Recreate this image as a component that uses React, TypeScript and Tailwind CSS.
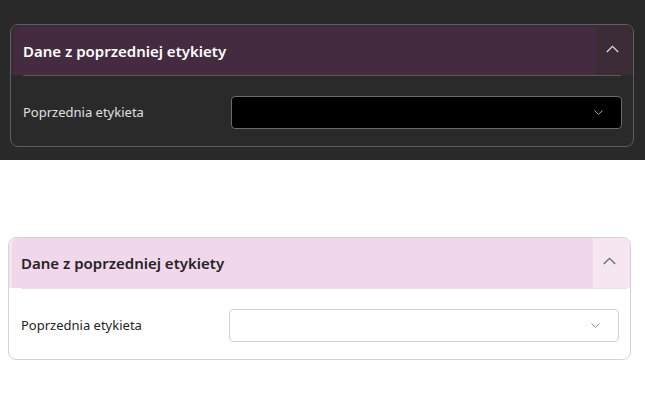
interface Props {
  dark?: boolean
}

function Section({ dark }: Props) {
  return (
    <div
      className={
        dark
          ? 'rounded-lg border border-[#5e5e5e] bg-[#2a2a2a] overflow-hidden'
          : 'rounded-lg border border-[#d4d4d4] bg-white overflow-hidden'
      }
    >
      <div
        className={
          dark
            ? 'flex bg-[#3a2b36] pl-[3px] pt-[2px]'
            : 'flex bg-[#f6e6f1] pl-[3px]'
        }
      >
        <div
          className={
            dark
              ? 'flex-1 h-[48px] flex items-center pl-[9px] bg-[#452b3f] rounded-tl-[6px]'
              : 'flex-1 h-[50px] flex items-center pl-[9px] bg-[#f1d7ea] rounded-tl-[6px]'
          }
        >
          <span
            className={
              dark
                ? 'text-[15px] font-semibold text-white'
                : 'text-[15px] font-semibold text-[#242424]'
            }
          >
            Dane z poprzedniej etykiety
          </span>
        </div>
        <div className={dark ? 'w-[37px] pt-[18px] pl-[10px]' : 'w-[37px] pt-[19px] pl-[10px]'}>
          {/* chevron up */}
          <svg width="13" height="8" viewBox="0 0 13 8" fill="none">
            <path
              d="M0.8 7 L6.5 1.3 L12.2 7"
              stroke={dark ? '#d9d9d9' : '#6b6b6b'}
              strokeWidth="1.3"
            />
          </svg>
        </div>
      </div>
      <div className={dark ? 'mx-[12px] h-px bg-[#5a5a5a]' : 'ml-[12px] mr-[3px] h-px bg-[#e3e3e3]'} />
      <div className="flex items-center pl-[12px] pr-[11px] pt-[20px] pb-[17px]">
        <span className={dark ? 'w-[208px] text-[13px] text-[#e0e0e0]' : 'w-[208px] text-[13px] text-[#242424]'}>
          Poprzednia etykieta
        </span>
        <div
          className={
            dark
              ? 'flex-1 h-[33px] rounded-[4px] border border-[#6b6b6b] bg-black flex items-center justify-end pr-[18px]'
              : 'flex-1 h-[33px] rounded-[4px] border border-[#d1d1d1] bg-white flex items-center justify-end pr-[18px]'
          }
        >
          {/* chevron down */}
          <svg width="9" height="5" viewBox="0 0 9 5" fill="none">
            <path
              d="M0.5 0.5 L4.5 4.3 L8.5 0.5"
              stroke={dark ? '#a8a8a8' : '#8a8a8a'}
              strokeWidth="1"
            />
          </svg>
        </div>
      </div>
    </div>
  )
}

export default function App() {
  return (
    <div className="w-[645px] h-[399px] bg-white" style={{ fontFamily: '"Noto Sans", "Open Sans", sans-serif' }}>
      <div className="h-[160px] bg-[#292929] pt-[24px] pl-[10px] pr-[11px]">
        <Section dark />
      </div>
      <div className="pt-[77px] pl-[8px] pr-[14px]">
        <Section />
      </div>
    </div>
  )
}
